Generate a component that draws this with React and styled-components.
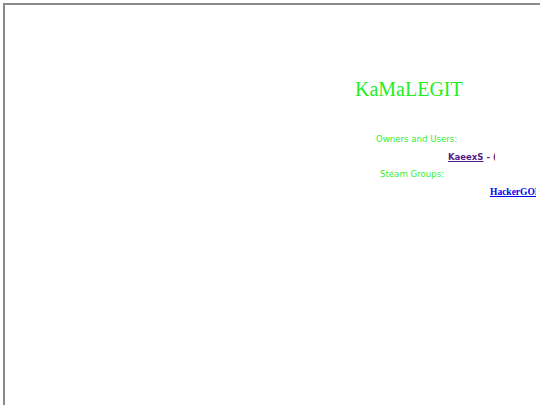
import React from "react";
import styled, { createGlobalStyle } from "styled-components";

const Global = createGlobalStyle`
  html, body {
    margin: 0;
    padding: 0;
    background: #fff;
    overflow: hidden;
  }
`;

export default function App() {
  return (
    <>
      <Global />
      <Frame>
        <Title>KaMaLEGIT</Title>
        <Label indent={371}>Owners and Users:</Label>
        <Clip indent={443} width={47}>
          <NameLink href="#">KaeexS</NameLink>
          <Dash> - (</Dash>
        </Clip>
        <Label indent={375}>Steam Groups:</Label>
        <Clip indent={485} width={46}>
          <GroupLink href="#">HackerGOD</GroupLink>
        </Clip>
      </Frame>
    </>
  );
}

const Frame = styled.div`
  margin: 3px 0 0 3px;
  width: 820px;
  height: 430px;
  border-top: 2px solid #8a8a8a;
  border-left: 2px solid #8a8a8a;
  overflow: hidden;
`;

const Title = styled.h1`
  margin: 72px 0 30px 350px;
  font-family: "Liberation Serif", "Times New Roman", serif;
  font-weight: normal;
  font-size: 20px;
  line-height: 24px;
  color: #22ee22;
  white-space: nowrap;
`;

const Label = styled.div`
  height: 17.6px;
  padding-left: ${(p) => p.indent}px;
  font-family: "DejaVu Sans", Verdana, sans-serif;
  font-size: 8.6px;
  line-height: 17.6px;
  color: #33ee33;
  white-space: nowrap;
`;

const Clip = styled.div`
  height: 17.6px;
  margin-left: ${(p) => p.indent}px;
  width: ${(p) => p.width}px;
  overflow: hidden;
  font-size: 8.5px;
  line-height: 17.6px;
  white-space: nowrap;
`;

const NameLink = styled.a`
  font-family: "DejaVu Sans", Verdana, sans-serif;
  font-weight: bold;
  font-size: 8.5px;
  color: #551a8b;
  text-decoration: underline;
`;

const Dash = styled.span`
  font-family: "DejaVu Sans", Verdana, sans-serif;
  font-weight: bold;
  font-size: 8.5px;
  color: #4a2370;
`;

const GroupLink = styled.a`
  font-family: "Liberation Serif", "Times New Roman", serif;
  font-weight: bold;
  font-size: 9.5px;
  color: #0000ee;
  text-decoration: underline;
`;
